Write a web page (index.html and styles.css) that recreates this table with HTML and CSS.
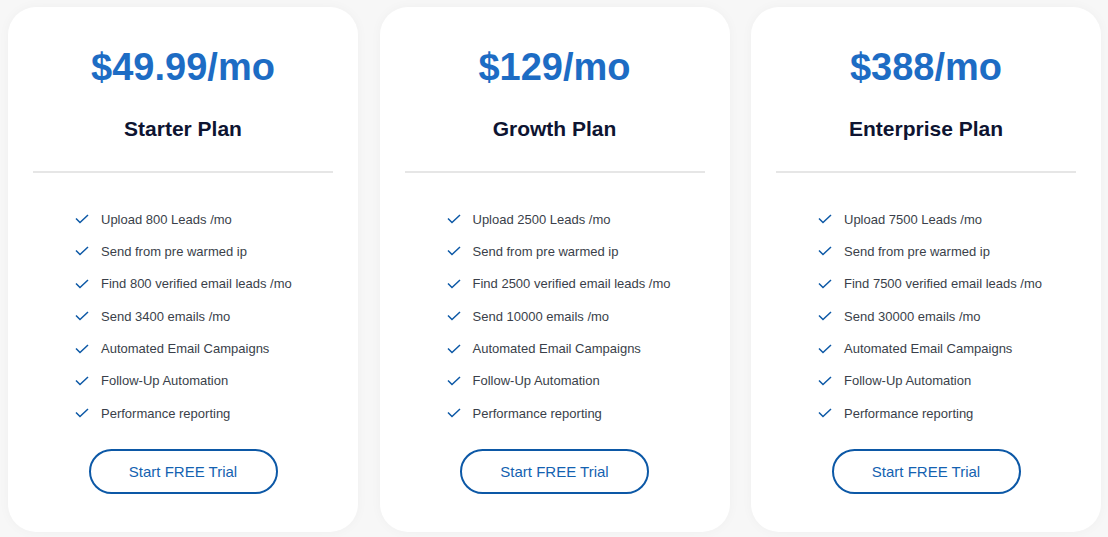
FILE: index.html
```html
<!DOCTYPE html>
<html lang="en">
<head>
    <meta charset="UTF-8">
    <meta name="viewport" content="width=device-width, initial-scale=1.0">
    <title>Pricing Plans</title>
    <link rel="stylesheet" href="styles.css">
</head>
<body>
    <div class="plans">
        <div class="plan-card">
            <div class="price">$49.99/mo</div>
            <h2 class="plan-name">Starter Plan</h2>
            <hr class="divider">
            <ul class="features">
                <li><svg class="check" viewBox="0 0 14 10"><path d="M1 4.5 L5 8.5 L13 1"/></svg>Upload 800 Leads /mo</li>
                <li><svg class="check" viewBox="0 0 14 10"><path d="M1 4.5 L5 8.5 L13 1"/></svg>Send from pre warmed ip</li>
                <li><svg class="check" viewBox="0 0 14 10"><path d="M1 4.5 L5 8.5 L13 1"/></svg>Find 800 verified email leads /mo</li>
                <li><svg class="check" viewBox="0 0 14 10"><path d="M1 4.5 L5 8.5 L13 1"/></svg>Send 3400 emails /mo</li>
                <li><svg class="check" viewBox="0 0 14 10"><path d="M1 4.5 L5 8.5 L13 1"/></svg>Automated Email Campaigns</li>
                <li><svg class="check" viewBox="0 0 14 10"><path d="M1 4.5 L5 8.5 L13 1"/></svg>Follow-Up Automation</li>
                <li><svg class="check" viewBox="0 0 14 10"><path d="M1 4.5 L5 8.5 L13 1"/></svg>Performance reporting</li>
            </ul>
            <a href="#" class="btn-trial">Start FREE Trial</a>
        </div>

        <div class="plan-card">
            <div class="price">$129/mo</div>
            <h2 class="plan-name">Growth Plan</h2>
            <hr class="divider">
            <ul class="features">
                <li><svg class="check" viewBox="0 0 14 10"><path d="M1 4.5 L5 8.5 L13 1"/></svg>Upload 2500 Leads /mo</li>
                <li><svg class="check" viewBox="0 0 14 10"><path d="M1 4.5 L5 8.5 L13 1"/></svg>Send from pre warmed ip</li>
                <li><svg class="check" viewBox="0 0 14 10"><path d="M1 4.5 L5 8.5 L13 1"/></svg>Find 2500 verified email leads /mo</li>
                <li><svg class="check" viewBox="0 0 14 10"><path d="M1 4.5 L5 8.5 L13 1"/></svg>Send 10000 emails /mo</li>
                <li><svg class="check" viewBox="0 0 14 10"><path d="M1 4.5 L5 8.5 L13 1"/></svg>Automated Email Campaigns</li>
                <li><svg class="check" viewBox="0 0 14 10"><path d="M1 4.5 L5 8.5 L13 1"/></svg>Follow-Up Automation</li>
                <li><svg class="check" viewBox="0 0 14 10"><path d="M1 4.5 L5 8.5 L13 1"/></svg>Performance reporting</li>
            </ul>
            <a href="#" class="btn-trial">Start FREE Trial</a>
        </div>

        <div class="plan-card">
            <div class="price">$388/mo</div>
            <h2 class="plan-name">Enterprise Plan</h2>
            <hr class="divider">
            <ul class="features">
                <li><svg class="check" viewBox="0 0 14 10"><path d="M1 4.5 L5 8.5 L13 1"/></svg>Upload 7500 Leads /mo</li>
                <li><svg class="check" viewBox="0 0 14 10"><path d="M1 4.5 L5 8.5 L13 1"/></svg>Send from pre warmed ip</li>
                <li><svg class="check" viewBox="0 0 14 10"><path d="M1 4.5 L5 8.5 L13 1"/></svg>Find 7500 verified email leads /mo</li>
                <li><svg class="check" viewBox="0 0 14 10"><path d="M1 4.5 L5 8.5 L13 1"/></svg>Send 30000 emails /mo</li>
                <li><svg class="check" viewBox="0 0 14 10"><path d="M1 4.5 L5 8.5 L13 1"/></svg>Automated Email Campaigns</li>
                <li><svg class="check" viewBox="0 0 14 10"><path d="M1 4.5 L5 8.5 L13 1"/></svg>Follow-Up Automation</li>
                <li><svg class="check" viewBox="0 0 14 10"><path d="M1 4.5 L5 8.5 L13 1"/></svg>Performance reporting</li>
            </ul>
            <a href="#" class="btn-trial">Start FREE Trial</a>
        </div>
    </div>
</body>
</html>
```

FILE: styles.css
```css
:root {
    --primary-color: #1d6cc4;
    --primary-dark: #0c58a6;
    --title-color: #0e1431;
    --text-color: #3a3f4a;
    --bg-color: #f7f7f7;
    --card-color: #ffffff;
}

* {
    box-sizing: border-box;
    margin: 0;
    padding: 0;
}

body {
    font-family: 'Liberation Sans', Arial, sans-serif;
    background-color: var(--bg-color);
    padding: 7px 8px;
    min-height: 100vh;
}

.plans {
    display: grid;
    grid-template-columns: repeat(3, 350px);
    column-gap: 21.5px;
}

.plan-card {
    background-color: var(--card-color);
    border-radius: 28px;
    box-shadow: 0 0 12px rgba(0, 0, 0, 0.035);
    padding: 38px 25px 38px;
    display: flex;
    flex-direction: column;
    align-items: center;
}

.price {
    font-size: 38px;
    line-height: 44px;
    font-weight: bold;
    color: var(--primary-color);
    text-align: center;
}

.plan-name {
    margin-top: 27px;
    font-size: 21px;
    line-height: 26px;
    font-weight: bold;
    color: var(--title-color);
    text-align: center;
}

.divider {
    align-self: stretch;
    margin-top: 29px;
    border: none;
    border-top: 2px solid #e6e6e6;
}

.features {
    align-self: stretch;
    list-style: none;
    margin-top: 36px;
    padding-left: 42px;
    display: flex;
    flex-direction: column;
    gap: 12.4px;
}

.features li {
    display: flex;
    align-items: center;
    height: 20px;
    font-size: 13px;
    color: var(--text-color);
}

.check {
    width: 14px;
    height: 10px;
    margin-right: 12px;
    flex-shrink: 0;
    fill: none;
    stroke: var(--primary-dark);
    stroke-width: 1.5;
}

.btn-trial {
    margin-top: 26px;
    width: 189px;
    height: 45px;
    display: flex;
    align-items: center;
    justify-content: center;
    border: 2px solid var(--primary-dark);
    border-radius: 23px;
    color: #1462b1;
    font-size: 15px;
    text-decoration: none;
}
```
